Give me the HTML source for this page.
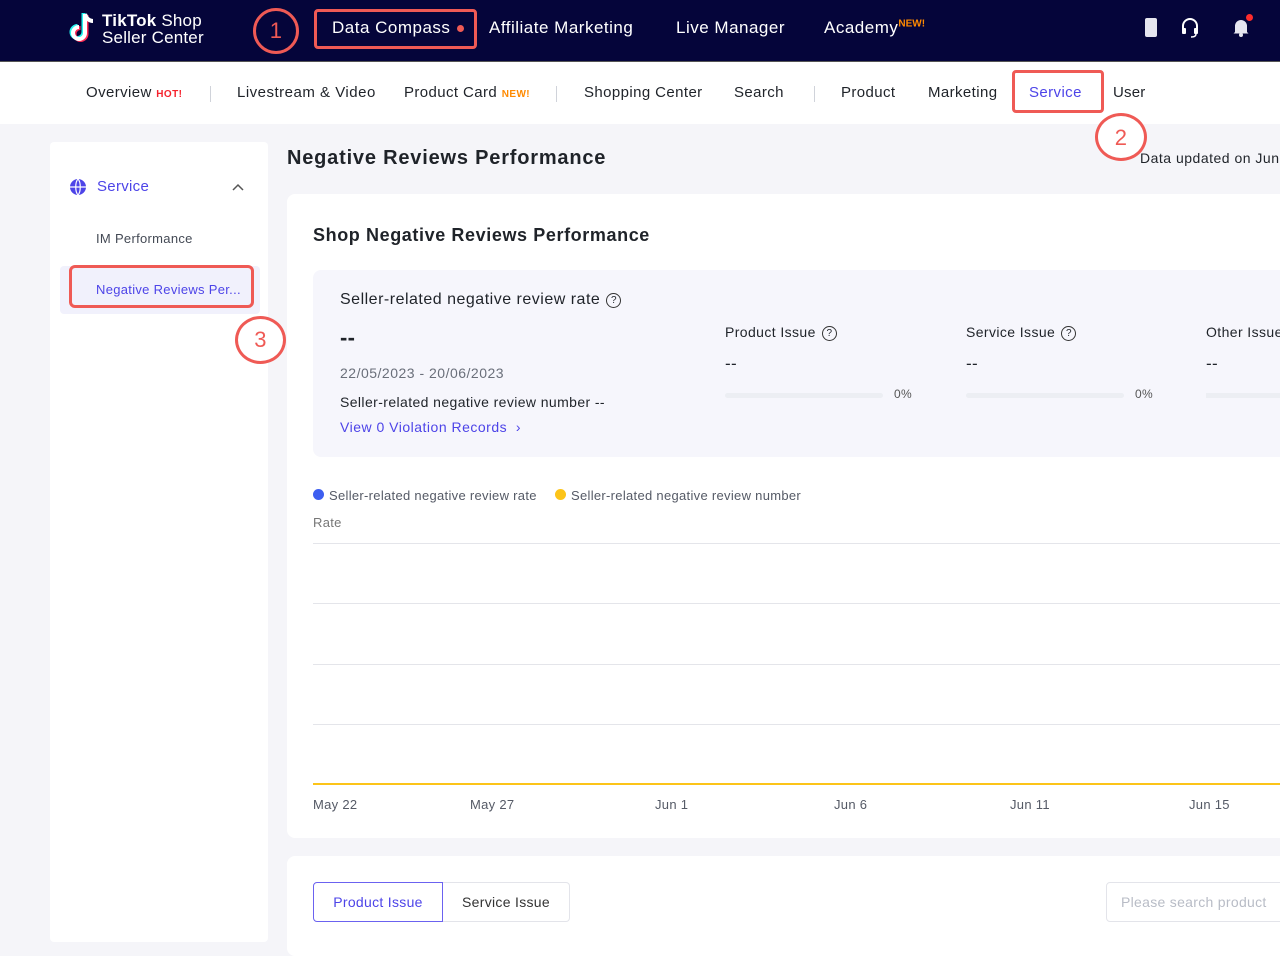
<!DOCTYPE html>
<html><head><meta charset="utf-8"><style>
*{box-sizing:border-box;margin:0;padding:0}
body{width:1280px;height:933px;overflow:hidden;background:#f5f5f9;font-family:"Liberation Sans",sans-serif;color:#1f2329;position:relative;letter-spacing:0.3px}
.a{position:absolute;white-space:nowrap}
.top{position:absolute;left:0;top:0;width:1280px;height:61px;background:#05053a}
.top .n{color:#fff;font-size:17px;top:18px;letter-spacing:0.5px}
.sub{position:absolute;left:0;top:61px;width:1280px;height:63px;background:#fff;border-top:1px solid #555}
.sub .n{font-size:15px;top:22px;color:#1f2329;font-weight:bold;letter-spacing:0.2px}
.sep{position:absolute;top:24px;width:1px;height:16px;background:#d0d3da}
.red{border:3px solid #ef5a55;position:absolute;border-radius:4px}
.circ{position:absolute;border:3px solid #ef5a55;border-radius:50%;background:#fff;color:#ef5a55;font-size:22px;text-align:center}
.q{display:inline-block;width:15px;height:15px;border:1.3px solid #333;border-radius:50%;font-size:10px;text-align:center;line-height:13px;vertical-align:1px;margin-left:6px;letter-spacing:0}
.grid{position:absolute;left:313px;width:967px;height:1px;background:#e4e5ea}
.xl{position:absolute;top:797px;font-size:13px;color:#555a66}
</style></head><body>
<div class="top">
  <svg class="a" style="left:68px;top:11px" width="30" height="34" viewBox="0 0 30 34"><path d="M17 3v19a6 6 0 1 1-6-6" fill="none" stroke="#25f4ee" stroke-width="4" transform="translate(-1.5,-1)"/><path d="M17 3v19a6 6 0 1 1-6-6" fill="none" stroke="#fe2c55" stroke-width="4" transform="translate(1.5,1)"/><path d="M17 3v19a6 6 0 1 1-6-6M17 3c1 4 4 7 8 7" fill="none" stroke="#fff" stroke-width="4"/></svg>
  <div class="a" style="left:102px;top:12px;color:#fff;font-size:17px;line-height:17px;letter-spacing:0.2px"><b>TikTok</b> Shop<br>Seller Center</div>
  <div class="circ" style="left:253px;top:8px;width:46px;height:46px;background:none;line-height:40px">1</div>
  <div class="red" style="left:314px;top:9px;width:163px;height:40px"></div>
  <div class="a n" style="left:332px">Data Compass</div>
  <div class="a" style="left:457px;top:25px;width:7px;height:7px;border-radius:50%;background:#ef5a55"></div>
  <div class="a n" style="left:489px">Affiliate Marketing</div>
  <div class="a n" style="left:676px">Live Manager</div>
  <div class="a n" style="left:824px">Academy<sup style="color:#ff8a00;font-size:10px;font-weight:bold;letter-spacing:0">NEW!</sup></div>
  <div class="a" style="left:1145px;top:18px;width:12px;height:19px;background:#e6e6ef;border-radius:2px"></div>
  <svg class="a" style="left:1180px;top:17px" width="20" height="22" viewBox="0 0 20 22"><path d="M3 12V9a7 7 0 0 1 14 0v3" fill="none" stroke="#fff" stroke-width="2"/><rect x="2" y="11" width="4" height="6" rx="1" fill="#fff"/><rect x="14" y="11" width="4" height="6" rx="1" fill="#fff"/><path d="M16 17q0 3-5 3" stroke="#fff" stroke-width="1.5" fill="none"/></svg>
  <svg class="a" style="left:1231px;top:17px" width="20" height="20" viewBox="0 0 20 20"><path d="M4 15V9a6 6 0 0 1 12 0v6l1.5 1.5h-15z" fill="#e6e6ef"/><circle cx="10" cy="18" r="2" fill="#e6e6ef"/></svg>
  <div class="a" style="left:1246px;top:14px;width:7px;height:7px;border-radius:50%;background:#fe2c2c"></div>
</div>
<div class="sub">
  <div class="a n" style="left:86px;font-weight:normal;letter-spacing:0.4px">Overview <b style="color:#f5222d;font-size:10px">HOT!</b></div>
  <div class="sep" style="left:210px"></div>
  <div class="a n" style="left:237px;font-weight:normal;letter-spacing:0.5px">Livestream &amp; Video</div>
  <div class="a n" style="left:404px;font-weight:normal;letter-spacing:0.4px">Product Card <b style="color:#ff8a00;font-size:10px">NEW!</b></div>
  <div class="sep" style="left:556px"></div>
  <div class="a n" style="left:584px;font-weight:normal;letter-spacing:0.4px">Shopping Center</div>
  <div class="a n" style="left:734px;font-weight:normal;letter-spacing:0.4px">Search</div>
  <div class="sep" style="left:814px"></div>
  <div class="a n" style="left:841px;font-weight:normal;letter-spacing:0.4px">Product</div>
  <div class="a n" style="left:928px;font-weight:normal;letter-spacing:0.4px">Marketing</div>
  <div class="red" style="left:1012px;top:8px;width:92px;height:43px"></div>
  <div class="a n" style="left:1029px;color:#4d44e8;font-weight:normal;letter-spacing:0.4px">Service</div>
  <div class="a n" style="left:1113px;font-weight:normal">User</div>
</div>
<div class="circ" style="left:1095px;top:113px;width:52px;height:48px;line-height:43px">2</div>
<div class="a" style="left:50px;top:142px;width:218px;height:800px;background:#fff;border-radius:4px"></div>
<svg class="a" style="left:69px;top:178px" width="18" height="18" viewBox="0 0 18 18"><circle cx="9" cy="9" r="8" fill="#4d44e8"/><path d="M1 9h16M9 1c-3 3-3 13 0 16M9 1c3 3 3 13 0 16" stroke="#fff" stroke-width="1.2" fill="none"/></svg>
<div class="a" style="left:97px;top:178px;font-size:15px;color:#4d44e8">Service</div>
<svg class="a" style="left:232px;top:183px" width="12" height="8"><path d="M1 7l5-5 5 5" stroke="#555" stroke-width="1.5" fill="none"/></svg>
<div class="a" style="left:96px;top:231px;font-size:13px;color:#444a55">IM Performance</div>
<div class="a" style="left:60px;top:266px;width:200px;height:48px;background:#f1f1fc;border-radius:4px"></div>
<div class="red" style="left:69px;top:265px;width:185px;height:43px;border-radius:6px"></div>
<div class="a" style="left:96px;top:282px;font-size:13px;color:#4d44e8">Negative Reviews Per...</div>
<div class="circ" style="left:235px;top:316px;width:51px;height:48px;line-height:42px">3</div>
<div class="a" style="left:287px;top:147px;font-size:20px;font-weight:bold;letter-spacing:0.8px">Negative Reviews Performance</div>
<div class="a" style="left:1140px;top:150px;font-size:14px;letter-spacing:0.5px">Data updated on Jun</div>
<div class="a" style="left:287px;top:194px;width:1000px;height:644px;background:#fff;border-radius:8px"></div>
<div class="a" style="left:313px;top:225px;font-size:18px;font-weight:bold;letter-spacing:0.6px">Shop Negative Reviews Performance</div>
<div class="a" style="left:313px;top:270px;width:980px;height:187px;background:#f6f6fc;border-radius:8px"></div>
<div class="a" style="left:340px;top:291px;font-size:16px;letter-spacing:0.5px">Seller-related negative review rate<span class="q">?</span></div>
<div class="a" style="left:340px;top:325px;font-size:22px;font-weight:bold">--</div>
<div class="a" style="left:340px;top:365px;font-size:14px;color:#6a6f7a;letter-spacing:0.5px">22/05/2023 - 20/06/2023</div>
<div class="a" style="left:340px;top:394px;font-size:14px;letter-spacing:0.4px">Seller-related negative review number --</div>
<div class="a" style="left:340px;top:419px;font-size:14px;color:#4d44e8;letter-spacing:0.5px">View 0 Violation Records &nbsp;›</div>
<div class="a" style="left:725px;top:324px;font-size:14px;letter-spacing:0.4px">Product Issue<span class="q">?</span></div>
<div class="a" style="left:725px;top:354px;font-size:17px">--</div>
<div class="a" style="left:725px;top:393px;width:158px;height:5px;background:#eceef3;border-radius:3px"></div>
<div class="a" style="left:894px;top:387px;font-size:12px;color:#555">0%</div>
<div class="a" style="left:966px;top:324px;font-size:14px;letter-spacing:0.4px">Service Issue<span class="q">?</span></div>
<div class="a" style="left:966px;top:354px;font-size:17px">--</div>
<div class="a" style="left:966px;top:393px;width:158px;height:5px;background:#eceef3;border-radius:3px"></div>
<div class="a" style="left:1135px;top:387px;font-size:12px;color:#555">0%</div>
<div class="a" style="left:1206px;top:324px;font-size:14px;letter-spacing:0.4px">Other Issue</div>
<div class="a" style="left:1206px;top:354px;font-size:17px">--</div>
<div class="a" style="left:1206px;top:393px;width:80px;height:5px;background:#eceef3"></div>
<div class="a" style="left:313px;top:489px;width:11px;height:11px;border-radius:50%;background:#3d5ef0"></div>
<div class="a" style="left:329px;top:488px;font-size:13px;color:#555a66">Seller-related negative review rate</div>
<div class="a" style="left:555px;top:489px;width:11px;height:11px;border-radius:50%;background:#fcc419"></div>
<div class="a" style="left:571px;top:488px;font-size:13px;color:#555a66">Seller-related negative review number</div>
<div class="a" style="left:313px;top:515px;font-size:13px;color:#777">Rate</div>
<div class="grid" style="top:543px"></div><div class="grid" style="top:603px"></div><div class="grid" style="top:664px"></div><div class="grid" style="top:724px"></div>
<div class="grid" style="top:783px;height:2px;background:#fcc419"></div>
<div class="xl" style="left:313px">May 22</div><div class="xl" style="left:470px">May 27</div><div class="xl" style="left:655px">Jun 1</div><div class="xl" style="left:834px">Jun 6</div><div class="xl" style="left:1010px">Jun 11</div><div class="xl" style="left:1189px">Jun 15</div>
<div class="a" style="left:287px;top:856px;width:1000px;height:100px;background:#fff;border-radius:8px"></div>
<div class="a" style="left:313px;top:882px;width:130px;height:40px;border:1px solid #6b62f0;border-radius:4px 0 0 4px;color:#4d44e8;font-size:14px;line-height:38px;text-align:center">Product Issue</div>
<div class="a" style="left:443px;top:882px;width:127px;height:40px;border:1px solid #e3e4ea;border-left:none;border-radius:0 4px 4px 0;font-size:14px;line-height:38px;text-align:center;color:#333">Service Issue</div>
<div class="a" style="left:1106px;top:882px;width:190px;height:40px;border:1px solid #e3e4ea;border-radius:4px;font-size:14px;line-height:38px;padding-left:14px;color:#b8bcc6">Please search product</div>
</body></html>
